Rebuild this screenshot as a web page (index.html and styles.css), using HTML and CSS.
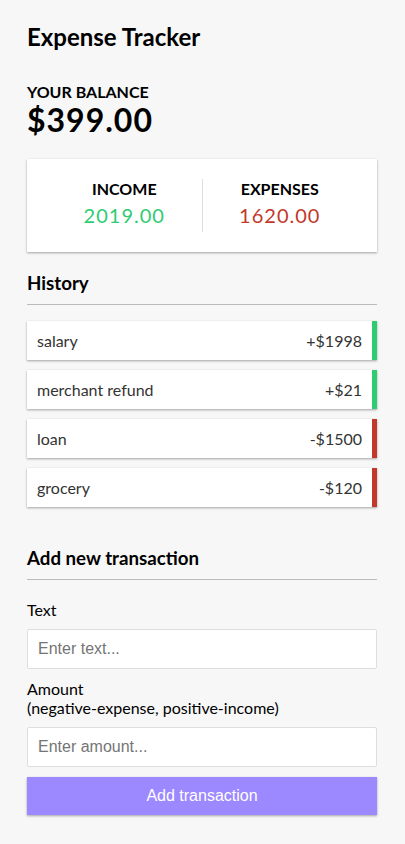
FILE: index.html
```html
<!DOCTYPE html>
<html lang="en">
<head>
<meta charset="UTF-8">
<title>Expense Tracker</title>
<link rel="stylesheet" href="styles.css">
</head>
<body>
<div class="container">
  <h2 class="title">Expense Tracker</h2>
  <h4 class="label-up">Your Balance</h4>
  <h1 class="balance">$399.00</h1>
  <div class="inc-exp-container">
    <div class="inc-exp">
      <h4 class="label-up">Income</h4>
      <p class="money plus">2019.00</p>
    </div>
    <div class="inc-exp">
      <h4 class="label-up">Expenses</h4>
      <p class="money minus">1620.00</p>
    </div>
  </div>
  <h3 class="section">History</h3>
  <ul class="list">
    <li class="item plus"><span>salary</span><span>+$1998</span></li>
    <li class="item plus"><span>merchant refund</span><span>+$21</span></li>
    <li class="item minus"><span>loan</span><span>-$1500</span></li>
    <li class="item minus"><span>grocery</span><span>-$120</span></li>
  </ul>
  <h3 class="section">Add new transaction</h3>
  <form class="form">
    <div class="form-control">
      <label class="field-label" for="text">Text</label>
      <input class="field" type="text" id="text" placeholder="Enter text...">
    </div>
    <div class="form-control">
      <label class="field-label" for="amount">Amount <br>(negative-expense, positive-income)</label>
      <input class="field" type="number" id="amount" placeholder="Enter amount...">
    </div>
    <button class="btn" type="button">Add transaction</button>
  </form>
</div>
</body>
</html>
```

FILE: styles.css
```css
* {
  box-sizing: border-box;
}

body {
  background-color: #f7f7f7;
  margin: 0;
  font-family: Lato, "Noto Sans", sans-serif;
}

.container {
  margin: 0 28px 0 27px;
  padding-top: 22px;
  width: 350px;
}

.title {
  font-size: 24px;
  margin: 0 0 31px;
}

.label-up {
  font-size: 16px;
  margin: 0;
  text-transform: uppercase;
}

.balance {
  font-size: 32px;
  letter-spacing: 1px;
  margin: 0;
  line-height: 1.2;
}

.inc-exp-container {
  background-color: #fff;
  box-shadow: 0 1px 3px rgba(0, 0, 0, 0.12), 0 1px 2px rgba(0, 0, 0, 0.24);
  padding: 20px;
  display: flex;
  justify-content: space-between;
  margin: 20px 0;
}

.inc-exp {
  flex: 1;
  text-align: center;
}

.inc-exp:first-of-type {
  border-right: 1px solid #dedede;
}

.money {
  font-size: 20px;
  letter-spacing: 1px;
  margin: 5px 0;
}

.money.plus {
  color: #2ecc71;
}

.money.minus {
  color: #c0392b;
}

.section {
  font-size: 18.72px;
  border-bottom: 1px solid #bbb;
  padding-bottom: 10px;
  margin: 20px 0 10px;
}

.list {
  list-style-type: none;
  padding: 0;
  margin: 16px 0 40px;
}

.item {
  background-color: #fff;
  box-shadow: 0 1px 3px rgba(0, 0, 0, 0.12), 0 1px 2px rgba(0, 0, 0, 0.24);
  color: #333;
  display: flex;
  justify-content: space-between;
  padding: 10px;
  margin: 10px 0;
}

.item.plus {
  border-right: 5px solid #2ecc71;
}

.item.minus {
  border-right: 5px solid #c0392b;
}

.form {
  margin: 0;
}

.field-label {
  display: inline-block;
  margin: 10px 0;
}

.field {
  border: 1px solid #dedede;
  border-radius: 2px;
  display: block;
  font-family: "Liberation Sans", Arial, sans-serif;
  font-size: 16px;
  padding: 10px;
  width: 100%;
}

.field::placeholder {
  color: #757575;
}

.btn {
  background-color: #9c88ff;
  box-shadow: 0 1px 3px rgba(0, 0, 0, 0.12), 0 1px 2px rgba(0, 0, 0, 0.24);
  color: #fff;
  border: 0;
  display: block;
  font-family: "Liberation Sans", Arial, sans-serif;
  font-size: 16px;
  margin: 10px 0 30px;
  padding: 10px;
  width: 100%;
}
```
